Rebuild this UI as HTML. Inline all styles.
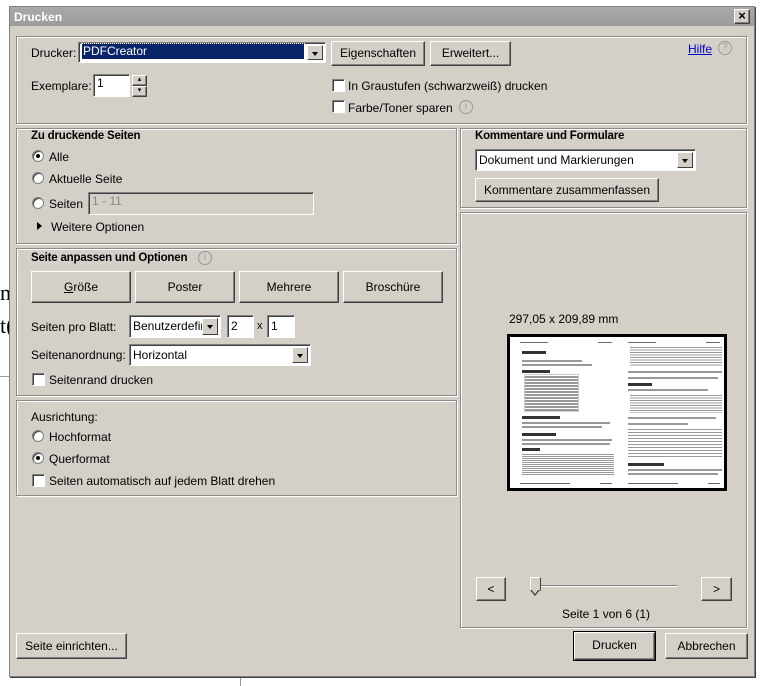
<!DOCTYPE html>
<html><head><meta charset="utf-8"><style>
*{margin:0;padding:0;box-sizing:border-box}
body{width:765px;height:686px;background:#fff;position:relative;overflow:hidden;font-family:"Liberation Sans",sans-serif;font-size:12px;color:#000}
.a{position:absolute}
.win{left:9px;top:6px;width:746px;height:671px;background:#d4d0c8;border:1px solid #808080;box-shadow:1px 1px 0 #404040}
.title{left:10px;top:7px;width:744px;height:19px;background:linear-gradient(#a9a9a9,#9c9c9c);color:#fff;font-weight:bold;font-size:12px;padding:3px 4px}
.pan{border:1px solid #8e8c88;box-shadow:inset 1px 1px 0 #fff,1px 1px 0 #fff}
.btn{background:#d4d0c8;border:1px solid;border-color:#fff #404040 #404040 #fff;box-shadow:inset -1px -1px 0 #808080;text-align:center}
.inp{background:#fff;border:1px solid;border-color:#808080 #fff #fff #808080;box-shadow:inset 1px 1px 0 #404040;padding:1px 3px}
.dd{position:absolute;right:2px;top:2px;bottom:2px;width:16px;background:#d4d0c8;border:1px solid;border-color:#fff #404040 #404040 #fff}
.dd:after{content:"";position:absolute;left:4px;top:6px;border:3.5px solid transparent;border-top:4px solid #000;border-bottom:0}
.cb{width:13px;height:13px;background:#fff;border:1px solid;border-color:#808080 #fff #fff #808080;box-shadow:inset 1px 1px 0 #404040}
.rd{width:12px;height:12px;border-radius:50%;background:#fff;border:1px solid #808080;box-shadow:inset 1px 1px 0 #404040}
.rd.on:after{content:"";position:absolute;left:3px;top:3px;width:4px;height:4px;border-radius:50%;background:#000}
.b{font-weight:bold;font-size:11.5px;letter-spacing:-0.2px}
.ic{width:14px;height:14px;border-radius:50%;border:1px solid #9a9a9a;color:#9a9a9a;font-size:10px;text-align:center;line-height:12px}
.pg{background:#fff;border:3px solid #000}
.l{position:absolute;height:2px;background:#999}
.h{position:absolute;height:3px;background:#333}
</style></head><body>
<div class="a" style="left:0;top:280px;font-family:'Liberation Serif',serif;font-size:22px">nt</div>
<div class="a" style="left:0;top:313px;font-family:'Liberation Serif',serif;font-size:22px">t(</div>
<div class="a" style="left:0;top:376px;width:10px;height:1px;background:#999"></div>
<div class="a" style="left:240px;top:677px;width:1px;height:9px;background:#999"></div>
<div class="a win"></div>
<div class="a title">Drucken</div>
<div class="a btn" style="left:734px;top:9px;width:16px;height:15px;font-size:13px;line-height:12px;font-weight:bold">×</div>

<div class="a pan" style="left:16px;top:36px;width:731px;height:88px"></div>
<div class="a" style="left:31px;top:46px">Drucker:</div>
<div class="a inp" style="left:78px;top:42px;width:248px;height:21px"><div style="background:#0a246a;color:#fff;height:15px;width:222px;outline:1px dotted #fff;padding-left:1px;line-height:15px">PDFCreator</div><div class="dd"></div></div>
<div class="a btn" style="left:331px;top:41px;width:94px;height:25px;line-height:23px">Eigenschaften</div>
<div class="a btn" style="left:430px;top:41px;width:81px;height:25px;line-height:23px">Erweitert...</div>
<div class="a" style="left:688px;top:42px;color:#00c;text-decoration:underline">Hilfe</div>
<div class="a ic" style="left:718px;top:41px">?</div>
<div class="a" style="left:31px;top:79px">Exemplare:</div>
<div class="a inp" style="left:93px;top:74px;width:37px;height:23px">1</div>
<div class="a btn" style="left:132px;top:75px;width:15px;height:11px;font-size:7px;line-height:8px">▴</div>
<div class="a btn" style="left:132px;top:86px;width:15px;height:11px;font-size:7px;line-height:8px">▾</div>
<div class="a cb" style="left:332px;top:79px"></div><div class="a" style="left:348px;top:79px">In Graustufen (schwarzweiß) drucken</div>
<div class="a cb" style="left:332px;top:100px"></div><div class="a" style="left:348px;top:101px">Farbe/Toner sparen</div>
<div class="a ic" style="left:459px;top:100px">i</div>

<div class="a pan" style="left:16px;top:128px;width:441px;height:116px"></div>
<div class="a b" style="left:31px;top:130px">Zu druckende Seiten</div>
<div class="a rd on" style="left:32px;top:150px"></div><div class="a" style="left:49px;top:150px">Alle</div>
<div class="a rd" style="left:32px;top:172px"></div><div class="a" style="left:49px;top:172px">Aktuelle Seite</div>
<div class="a rd" style="left:32px;top:197px"></div><div class="a" style="left:49px;top:197px">Seiten</div>
<div class="a inp" style="left:88px;top:192px;width:226px;height:23px;background:#d4d0c8;color:#888">1 - 11</div>
<div class="a" style="left:37px;top:222px;border:4px solid transparent;border-left:5px solid #000;border-right:0"></div>
<div class="a" style="left:51px;top:220px">Weitere Optionen</div>

<div class="a pan" style="left:16px;top:248px;width:441px;height:148px"></div>
<div class="a b" style="left:31px;top:252px">Seite anpassen und Optionen</div>
<div class="a ic" style="left:198px;top:251px">i</div>
<div class="a btn" style="left:31px;top:271px;width:100px;height:32px;line-height:30px"><u>G</u>röße</div>
<div class="a btn" style="left:135px;top:271px;width:100px;height:32px;line-height:30px">Poster</div>
<div class="a btn" style="left:239px;top:271px;width:100px;height:32px;line-height:30px">Mehrere</div>
<div class="a btn" style="left:343px;top:271px;width:100px;height:32px;line-height:30px">Broschüre</div>
<div class="a" style="left:31px;top:320px">Seiten pro Blatt:</div>
<div class="a inp" style="left:129px;top:315px;width:92px;height:23px;line-height:19px">Benutzerdefir<div class="dd"></div></div>
<div class="a inp" style="left:227px;top:315px;width:27px;height:23px;line-height:19px">2</div>
<div class="a" style="left:257px;top:320px;font-size:11px">x</div>
<div class="a inp" style="left:267px;top:315px;width:28px;height:23px;line-height:19px">1</div>
<div class="a" style="left:31px;top:348px">Seitenanordnung:</div>
<div class="a inp" style="left:129px;top:344px;width:182px;height:22px;line-height:18px">Horizontal<div class="dd"></div></div>
<div class="a cb" style="left:32px;top:373px"></div><div class="a" style="left:49px;top:373px">Seitenrand drucken</div>

<div class="a pan" style="left:16px;top:400px;width:441px;height:96px"></div>
<div class="a" style="left:31px;top:410px">Ausrichtung:</div>
<div class="a rd" style="left:32px;top:430px"></div><div class="a" style="left:49px;top:430px">Hochformat</div>
<div class="a rd on" style="left:32px;top:452px"></div><div class="a" style="left:49px;top:452px">Querformat</div>
<div class="a cb" style="left:32px;top:474px"></div><div class="a" style="left:49px;top:474px">Seiten automatisch auf jedem Blatt drehen</div>

<div class="a pan" style="left:460px;top:128px;width:287px;height:80px"></div>
<div class="a b" style="left:475px;top:130px">Kommentare und Formulare</div>
<div class="a inp" style="left:475px;top:149px;width:221px;height:22px;line-height:18px">Dokument und Markierungen<div class="dd"></div></div>
<div class="a btn" style="left:475px;top:178px;width:184px;height:24px;line-height:22px">Kommentare zusammenfassen</div>

<div class="a pan" style="left:460px;top:212px;width:287px;height:416px"></div>
<div class="a" style="left:509px;top:312px">297,05 x 209,89 mm</div>
<div class="a pg" style="left:507px;top:334px;width:220px;height:157px">
<div class="l" style="left:10px;top:5px;width:28px;height:1px;background:#666"></div><div class="l" style="left:88px;top:5px;width:14px;height:1px;background:#666"></div>
<div class="l" style="left:118px;top:5px;width:28px;height:1px;background:#666"></div><div class="l" style="left:196px;top:5px;width:14px;height:1px;background:#666"></div>
<div class="h" style="left:12px;top:14px;width:24px"></div>
<div class="l" style="left:12px;top:23px;width:60px"></div><div class="l" style="left:12px;top:27px;width:70px"></div>
<div class="h" style="left:12px;top:33px;width:28px"></div>
<div class="a" style="left:14px;top:37px;width:55px;height:38px;border:1px solid #ccc;background:repeating-linear-gradient(#fff 0 1px,#999 1px 3px)"></div>
<div class="h" style="left:12px;top:79px;width:38px"></div>
<div class="l" style="left:12px;top:85px;width:88px"></div><div class="l" style="left:12px;top:89px;width:80px"></div>
<div class="h" style="left:12px;top:96px;width:34px"></div>
<div class="l" style="left:12px;top:102px;width:90px"></div><div class="l" style="left:12px;top:106px;width:88px"></div>
<div class="h" style="left:12px;top:111px;width:18px"></div>
<div class="a" style="left:12px;top:117px;width:92px;height:22px;background:repeating-linear-gradient(#999 0 1px,#fff 1px 2px)"></div>
<div class="l" style="left:10px;top:146px;width:50px;height:1px;background:#666"></div><div class="l" style="left:90px;top:146px;width:12px;height:1px;background:#666"></div>
<div class="a" style="left:120px;top:10px;width:92px;height:20px;background:repeating-linear-gradient(#999 0 1px,#fff 1px 2.5px)"></div>
<div class="l" style="left:118px;top:34px;width:94px"></div><div class="l" style="left:118px;top:40px;width:90px"></div>
<div class="h" style="left:118px;top:46px;width:24px"></div>
<div class="l" style="left:118px;top:52px;width:80px"></div>
<div class="a" style="left:120px;top:58px;width:92px;height:18px;background:repeating-linear-gradient(#999 0 1px,#fff 1px 2.5px)"></div>
<div class="l" style="left:118px;top:80px;width:88px"></div><div class="l" style="left:118px;top:86px;width:60px"></div>
<div class="a" style="left:118px;top:92px;width:94px;height:30px;background:repeating-linear-gradient(#999 0 1px,#fff 1px 3px)"></div>
<div class="h" style="left:118px;top:126px;width:36px"></div>
<div class="l" style="left:118px;top:132px;width:94px"></div><div class="l" style="left:118px;top:136px;width:90px"></div>
<div class="l" style="left:118px;top:146px;width:50px;height:1px;background:#666"></div><div class="l" style="left:198px;top:146px;width:12px;height:1px;background:#666"></div>
</div>
<div class="a btn" style="left:476px;top:577px;width:30px;height:24px;line-height:22px">&lt;</div>
<div class="a btn" style="left:701px;top:577px;width:31px;height:24px;line-height:22px">&gt;</div>
<div class="a" style="left:535px;top:585px;width:142px;height:2px;border-top:1px solid #808080;border-bottom:1px solid #fff"></div>
<div class="a" style="left:530px;top:577px;width:11px;height:14px;background:#d4d0c8;border:1px solid;border-color:#fff #404040 transparent #fff"></div>
<div class="a" style="left:530px;top:590px;border:5.5px solid transparent;border-top:6px solid #404040;border-bottom:0"></div>
<div class="a" style="left:531px;top:589px;border:4.5px solid transparent;border-top:5px solid #d4d0c8;border-bottom:0"></div>
<div class="a" style="left:562px;top:607px">Seite 1 von 6 (1)</div>

<div class="a btn" style="left:16px;top:633px;width:111px;height:26px;line-height:24px">Seite einrichten...</div>
<div class="a btn" style="left:574px;top:632px;width:81px;height:28px;line-height:24px;outline:1px solid #000">Drucken</div>
<div class="a btn" style="left:665px;top:633px;width:83px;height:26px;line-height:24px">Abbrechen</div>
</body></html>
